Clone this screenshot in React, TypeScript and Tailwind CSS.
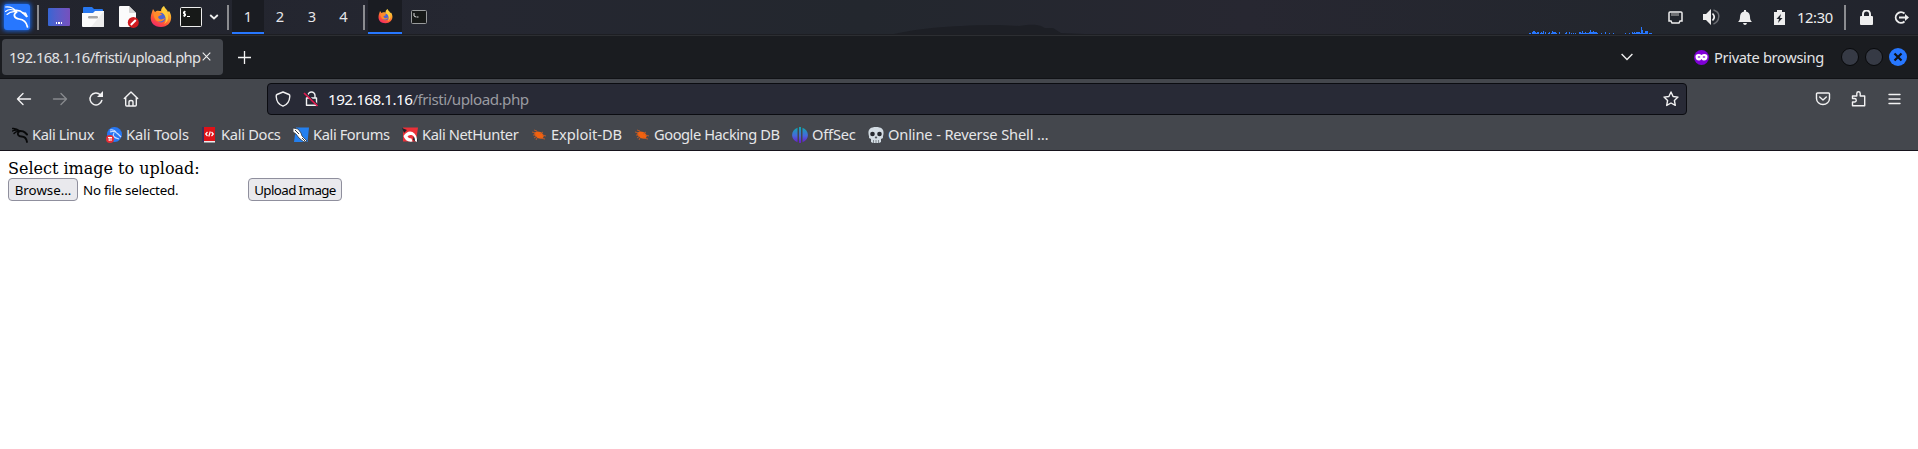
import React from "react";

type Kids = { children?: React.ReactNode };

function Slot({ w, ml, children }: { w: string; ml: string } & Kids) {
  return <div className={`flex h-full shrink-0 items-center ${w} ${ml}`}>{children}</div>;
}

function KaliLogo() {
  return (
    <svg width="26" height="26" viewBox="0 0 26 26" className="rounded-[3px] bg-[#2777ff] shadow-[0_0_4px_1px_#1763df]">
      <g fill="none" stroke="#fff" strokeLinecap="round">
        <path d="M1.500 3Q8 2 12.500 7.500M1.500 7.500Q6 3.500 12.500 7.500M3 10.500Q7 6.500 13 8" strokeWidth="1.100" />
        <path d="M11 6.500q5-.5 8 2.500l3.500 3.500" strokeWidth="1.700" />
        <path d="M18.500 9l3 .3 1.500 3" strokeWidth="1.500" />
        <path d="M12.500 8c-4 3-2 6.500 2.500 7 5 .5 7.500 3 8.500 8" strokeWidth="1.700" />
      </g>
    </svg>
  );
}

function Firefox({ size, id }: { size: number; id: string }) {
  return (
    <svg width={size} height={size} viewBox="0 0 22 22">
      <defs>
        <linearGradient id={id} x1="0.8" y1="0" x2="0.25" y2="1">
          <stop offset="0" stopColor="#fff44f" />
          <stop offset="0.35" stopColor="#ffa42d" />
          <stop offset="0.7" stopColor="#ff5636" />
          <stop offset="1" stopColor="#f0246c" />
        </linearGradient>
      </defs>
      <path d="M2 6l1-3 2 3c2-2 4-1 6-1 0-2 1-4 3-5 1 3 3 3 4 6l1-1c5 7 1 16-8 16C1 21-1 13 2 6z" fill={`url(#${id})`} />
      <circle cx="11" cy="11.8" r="4.7" fill="#4d65d4" />
      <path d="M4 7c3-2 7 0 8 2-2 0-3 1-4 2 1 3 4 3 7 1-1 4-8 5-10 1-1-2-2-4-1-6z" fill="#ff8b2a" />
      <path d="M14 1c0 3 4 5 4 9 1 4-2 7-4 8 4-4 1-9-2-12 0-2 0-4 2-5z" fill="#ffcd3c" />
    </svg>
  );
}

const Sep = () => <div className="h-[25px] w-[2px] bg-[#8b8c90]" />;

const bars: number[][] = [
  [0, 2, 1], [3, 1, 2], [4, 2, 3], [6, 1, 2], [7, 2, 1], [8, 2, 2], [11, 1, 1], [12, 1, 2], [13, 1, 1], [14, 1, 3], [16, 1, 2],
  [19, 2, 1], [20, 1, 2], [22, 1, 1], [23, 1, 3], [24, 4, 1], [24, 3, 2], [30, 1, 2], [36, 2, 1], [37, 1, 2], [40, 1, 2], [42, 1, 1], [44, 1, 1], [46, 1, 1],
  [50, 9, 1], [50, 2, 2], [53, 1, 3], [56, 1, 2], [59, 10, 1], [60, 8, 2], [61, 1, 4], [64, 1, 3], [72, 1, 1], [76, 1, 2], [80, 1, 1], [84, 1, 1],
  [96, 1, 1], [100, 1, 1], [103, 16, 1], [103, 1, 2], [105, 1, 2], [107, 4, 2], [112, 1, 7], [113, 1, 4], [116, 3, 3], [120, 3, 1],
];

function Panel() {
  return (
    <div className="flex h-[36px] w-full flex-col bg-[#23252e]">
      <div className="flex h-[34px] items-center bg-[linear-gradient(90deg,#22242d,#252731_25%,#23272e_45%,#272731_65%,#22262d_88%,#22242d)]">
        <Slot w="w-[26px]" ml="ml-[4px]"><KaliLogo /></Slot>
        <Slot w="w-[2px]" ml="ml-[7px]"><Sep /></Slot>
        <Slot w="w-[22px]" ml="ml-[9px]">
          <div className="flex h-[18px] w-[22px] items-end justify-center gap-[1px] rounded-[1px] bg-linear-to-r from-[#3565d3] to-[#7650bd] pb-[2px]">
            <i className="h-[2px] w-[1.500px] bg-white" /><i className="h-[2px] w-[1.500px] bg-white" /><i className="h-[2px] w-[1.500px] bg-white" />
          </div>
        </Slot>
        <Slot w="w-[22px]" ml="ml-[12px]">
          <svg width="22" height="20" viewBox="0 0 22 20">
            <path d="M1 8V1q0-1 1-1h8l2 2h8q1 0 1 1v5z" fill="#2777ef" />
            <path d="M0 6h11l2-2h9v15q0 1-1 1H1q-1 0-1-1z" fill="#fbfbfb" />
            <path d="M22 4v15q0 1-1 1H9z" fill="#ededed" />
            <rect x="6" y="9" width="10" height="2.4" rx="1.2" fill="#a7a7a7" />
          </svg>
        </Slot>
        <Slot w="w-[21px]" ml="ml-[14px]">
          <svg width="21" height="22" viewBox="0 0 21 22">
            <path d="M1 1q0-1 1-1h9l7 7v13q0 1-1 1H2q-1 0-1-1z" fill="#fbfbfb" />
            <path d="M11 0v6q0 1 1 1h6z" fill="#d5d5d5" />
            <circle cx="15.3" cy="16.4" r="5.5" fill="#d11b20" />
            <path d="M12.8 19l5-5" stroke="#fff" strokeWidth="2" />
          </svg>
        </Slot>
        <Slot w="w-[22px]" ml="ml-[11px]"><Firefox size={22} id="fox" /></Slot>
        <Slot w="w-[22px]" ml="ml-[8px]">
          <svg width="22" height="20" viewBox="0 0 22 20">
            <rect x=".5" y=".5" width="21" height="19" rx="1" fill="#171918" stroke="#eee" />
            <path d="M5.8 4.8H3.5v2h2v2H3M4.5 3.8v6M7 9.5h3" fill="none" stroke="#fff" />
          </svg>
        </Slot>
        <Slot w="w-[10px]" ml="ml-[7px]">
          <svg width="10" height="6"><path d="M1.2 1L5 4.5 8.8 1" fill="none" stroke="#eee" strokeWidth="1.8" /></svg>
        </Slot>
        <Slot w="w-[2px]" ml="ml-[8px]"><Sep /></Slot>
        <div className="ml-[3px] flex h-full text-[14.670px] leading-[32px] text-[#e6e6e8]">
          <div className="w-[32px] border-b-2 border-[#2777ff] bg-[#1a1c22] text-center">1</div>
          <div className="w-[32px] text-center">2</div>
          <div className="w-[32px] text-center">3</div>
          <div className="w-[31px] text-center">4</div>
        </div>
        <Slot w="w-[2px]" ml="ml-[4px]"><Sep /></Slot>
        <div className="ml-[3px] flex h-full w-[34px] items-center justify-center border-b-2 border-[#2777ff] bg-[#1a1c22]">
          <Firefox size={15} id="foxSmall" />
        </div>
        <Slot w="w-[16px]" ml="ml-[9px]">
          <svg width="16" height="14" viewBox="0 0 16 14">
            <rect x=".5" y=".5" width="15" height="13" rx="1" fill="#171918" stroke="#999b9c" />
            <path d="M3 3v3l2 1M5.5 7h2" fill="none" stroke="#ddd" />
          </svg>
        </Slot>
        <div className="flex h-full flex-1 items-end justify-between">
          <svg width="190" height="10" viewBox="0 0 190 10" className="ml-[467px]">
            <path d="M0 10C25 4 65 1 105 1l20 1c18-3 22 0 26 2h8l8 5 23 1z" fill="#1d1f25" />
          </svg>
          <svg width="124" height="8" viewBox="0 0 124 8" shapeRendering="crispEdges">
            {bars.map(([x, w, h], i) => <rect key={i} x={x} y={8 - h} width={w} height={h} fill="#2777ff" />)}
          </svg>
        </div>
        <Slot w="w-[15px]" ml="ml-[15px]">
          <svg width="15" height="13" viewBox="0 0 15 13">
            <path d="M2 1h11q1 0 1 1v8h-2l-1 2H4l-1-2H1V2q0-1 1-1z" fill="none" stroke="#eee" strokeWidth="1.5" />
            <path d="M4 2v3M6 2v3M8 2v3M10 2v3" stroke="#bbb" />
          </svg>
        </Slot>
        <Slot w="w-[18px]" ml="ml-[19px]">
          <svg width="18" height="16" viewBox="0 0 18 16">
            <path d="M1 5h3l5-5v16l-5-5H1z" fill="#eee" />
            <path d="M10.5 4.5q3.5 3.5 0 7" stroke="#eee" strokeWidth="1.7" fill="none" />
            <path d="M11.5 1q6 2 5.2 7-.4 5-5.2 7" stroke="#6c6e73" strokeWidth="1.5" fill="none" />
          </svg>
        </Slot>
        <Slot w="w-[14px]" ml="ml-[18px]">
          <svg width="14" height="15" viewBox="0 0 14 15">
            <path d="M6 0h2v1.5c3 .7 4 3 4 5.5 0 3 1 4 2 5H0c1-1 2-2 2-5 0-2.500 1-4.800 4-5.500zM5 13h4q-.5 2-2 2t-2-2z" fill="#eee" />
          </svg>
        </Slot>
        <Slot w="w-[11px]" ml="ml-[22px]">
          <svg width="11" height="15" viewBox="0 0 11 15">
            <path d="M0 2h3V0h5v2h3v13H0z" fill="#eee" /><path d="M7 4L2.500 9H5l-1 4 4.500-5H6z" fill="#22262d" />
          </svg>
        </Slot>
        <div className="ml-[12px] w-[37px] shrink-0 whitespace-nowrap pb-[1px] text-[14.700px] leading-[20px] tracking-[-0.350px] text-[#eee]">12:30</div>
        <Slot w="w-[2px]" ml="ml-[10px]"><Sep /></Slot>
        <Slot w="w-[13px]" ml="ml-[14px]">
          <svg width="13" height="15" viewBox="0 0 13 15"><rect y="6" width="13" height="9" rx="1" fill="#eee" /><path d="M3 7V4a3.500 3.500 0 017 0v3" stroke="#eee" strokeWidth="2" fill="none" /></svg>
        </Slot>
        <Slot w="w-[15px]" ml="ml-[21px]">
          <svg width="15" height="13" viewBox="0 0 15 13"><path d="M10.500 2.500A5.300 5.300 0 1010.500 10.500M5 6.500h7" stroke="#eee" strokeWidth="1.900" fill="none" /><path d="M11 3l4 3.500-4 3.500z" fill="#eee" /></svg>
        </Slot>
        <div className="w-[9px] shrink-0" />
      </div>
      <div className="h-px bg-[#1d1e23]" />
      <div className="h-px bg-[#2c2e32]" />
    </div>
  );
}

function TabStrip() {
  return (
    <div className="flex h-[43px] items-center border-b border-[#111216] bg-[#1a1c20] text-[#e3e3e5]">
      <div className="ml-[2px] flex h-[36px] w-[221px] items-center rounded-[4px] bg-[#44474d]">
        <span className="ml-[7px] w-[193px] whitespace-nowrap text-[14.670px] tracking-[-0.550px]">192.168.1.16/fristi/upload.php</span>
        <svg width="9" height="9" viewBox="0 0 9 9" className="mb-[1px]"><path d="M.7.700l7.600 7.600M8.300.700L.7 8.300" stroke="#eee" strokeWidth="1.100" /></svg>
      </div>
      <svg width="13" height="13" className="ml-[15px]"><path d="M6.500 0v13M0 6.500h13" stroke="#f4f4f4" strokeWidth="1.300" /></svg>
      <div className="flex-1" />
      <svg width="12" height="8" className="mr-[61px]"><path d="M.6 1L6 6.500 11.400 1" stroke="#eee" strokeWidth="1.400" fill="none" /></svg>
      <svg width="15" height="15" viewBox="0 0 15 15">
        <circle cx="7.500" cy="7.500" r="7.500" fill="#8000d7" />
        <path d="M1.500 6.500q0-2.500 3-2.500 2 0 3 .9 1-.9 3-.9 3 0 3 2.500 0 4-3.500 4-1.600 0-2.500-1.500-1 1.500-2.500 1.500-3.500 0-3.500-4z" fill="#fff" />
        <path d="M3.500 7q1.500-1.500 3 0-1.500 1.500-3 0zM8.500 7q1.500-1.500 3 0-1.500 1.500-3 0z" fill="#8000d7" />
      </svg>
      <span className="ml-[5px] w-[127px] whitespace-nowrap text-[14.670px] tracking-[-0.350px]">Private browsing</span>
      <div className="mr-[11px] flex gap-[6px]">
        <i className="h-[18px] w-[18px] rounded-full border border-[#08090b] bg-[#363a45]" />
        <i className="h-[18px] w-[18px] rounded-full border border-[#08090b] bg-[#363a45]" />
        <svg width="18" height="18"><circle cx="9" cy="9" r="9" fill="#2777ff" /><path d="M5.500 5.500l7 7M12.500 5.500l-7 7" stroke="#101116" strokeWidth="2.200" /></svg>
      </div>
    </div>
  );
}

function Line({ w = 16, h = 16, d, color = "#f2f2f3" }: { w?: number; h?: number; d: string; color?: string }) {
  return <svg width={w} height={h} viewBox={`0 0 ${w} ${h}`} className="shrink-0"><path d={d} fill="none" stroke={color} strokeWidth="1.400" strokeLinecap="round" strokeLinejoin="round" /></svg>;
}

function Toolbar() {
  return (
    <div className="flex h-[40px] items-center">
      <Slot w="w-[16px]" ml="ml-[16px]"><Line d="M14.500 8H1.500M7 2.500L1.500 8 7 13.500" /></Slot>
      <Slot w="w-[16px]" ml="ml-[20px]"><Line d="M1.500 8h13M9 2.500L14.500 8 9 13.500" color="#87898d" /></Slot>
      <Slot w="w-[16px]" ml="ml-[20px]">
        <svg width="16" height="16"><path d="M13.800 9.500a6 6 0 11-1.500-5.800" fill="none" stroke="#f2f2f3" strokeWidth="1.500" strokeLinecap="round" /><path d="M9 6h6V0z" fill="#f2f2f3" /></svg>
      </Slot>
      <Slot w="w-[16px]" ml="ml-[19px]"><Line d="M1.300 7.500L8 1l6.700 6.500M2.700 6.500V14q0 1 1 1h8.600q1 0 1-1V6.500M6 15v-4q0-1.500 2-1.500T10 11v4" /></Slot>
      <div className="ml-[128px] flex h-[32px] w-[1420px] items-center rounded-[4px] border border-[#0b0c11] bg-[#282a36]">
        <Slot w="w-[16px]" ml="ml-[7px]"><Line d="M8 1l6 2.500q1 .5.800 2C14.500 10 12 14 8 15.200 4 14 1.500 10 1.200 5.500q-.2-1.500.8-2z" /></Slot>
        <Slot w="w-[16px]" ml="ml-[12px]">
          <svg width="16" height="16"><path d="M5 7V4.500a3.500 3.500 0 017 0V7M3.500 7h10v7.300h-10z" stroke="#f2f2f3" strokeWidth="1.400" fill="none" strokeLinejoin="round" /><path d="M2 1.500l13.500 13" stroke="#282a36" strokeWidth="1.500" /><path d="M1 2l13.500 13" stroke="#e3194f" strokeWidth="1.700" /></svg>
        </Slot>
        <span className="ml-[9px] flex-1 whitespace-nowrap text-[15.200px] tracking-[-0.500px] text-[#9a9ba1]"><span className="text-[#fbfbfe]">192.168.1.16</span>/fristi/upload.php</span>
        <div className="mr-[7px]"><Line d="M8 1l2.100 4.500 4.900.6-3.600 3.400.9 4.900L8 12l-4.300 2.400.9-4.900L1 6.100l4.900-.6z" /></div>
      </div>
      <div className="flex-1" />
      <Slot w="w-[16px]" ml="ml-0"><Line d="M2.500 2h11q1 0 1 1v4.500a6.500 6 0 01-13 0V3q0-1 1-1zM4.700 6L8 9l3.300-3" /></Slot>
      <Slot w="w-[16px]" ml="ml-[20px]"><Line d="M1.500 14.700V11h2a1.500 1.500 0 000-3.500h-2V5h4.300V2.500a1.700 1.700 0 013.400 0V5h4.500v9.700z" /></Slot>
      <Slot w="w-[13px]" ml="ml-[21px]"><Line w={13} h={12} d="M1 1.500h11M1 6h11M1 10.500h11" /></Slot>
      <div className="w-[17px]" />
    </div>
  );
}

function BookmarkIcon({ name }: { name: string }) {
  return (
    <svg width="16" height="16" viewBox="0 0 16 16" className="block">
      {name === "linux" && <g fill="none" stroke="#08090a" strokeLinecap="round"><path d="M.5 1.500Q4 1 8 4M.5 4Q4 2 8 4M2 6.500Q4 4 8 4.500" strokeWidth="1.400" /><path d="M7 4q4-.500 6 1.500l2 2" strokeWidth="2" /><path d="M7 4.500c-2.500 2.500-.5 5 2.500 5 3.500 0 5 2 5.500 5.500" strokeWidth="1.800" /></g>}
      {name === "tools" && <g><circle cx="8.500" cy="7.500" r="7.500" fill="#2777f3" /><path d="M4 5q4-2 8 2l3 3M8 6q-3 4 5 6M4 3q4-1 6 2" stroke="#c8dcff" strokeWidth="1.200" fill="none" /><circle cx="4" cy="12" r="4" fill="#e52d34" /><path d="M2 10.500h4M3.200 10.500V14M5 10.500V14" stroke="#fff" /></g>}
      {name === "docs" && <g><path d="M1 0h13v15H1z" fill="#df1218" /><path d="M1 0h2v15H1z" fill="#39315a" /><path d="M3 14h11v1.500H3z" fill="#eee" /><path d="M6.500 5L4.700 7l1.800 2M10.500 5l1.800 2-1.800 2M9.300 4.500l-1.500 5" stroke="#fff" strokeWidth="1.200" fill="none" /></g>}
      {name === "forums" && <g><path d="M3 .5h13l-1.500 14.500H1z" fill="#2480ef" /><path d="M0 1l5 1 3 4 1 3 5 5-3 1-5-4-3-4-3-2z" fill="#fff" stroke="#22272d" strokeWidth=".7" /><path d="M2 3l4 4M9 11l3 3" stroke="#222" strokeWidth=".9" /></g>}
      {name === "hunter" && <g><path d="M1 .5h15l-2 14H1z" fill="#ea3038" /><path d="M0 1l5 2-3 3zM12 8l4 5-1 2-4-2z" fill="#1d2229" /><path d="M1.500 9q4-6 9-4 5 3 4.500 10l-2-1q0-5-3.500-6-3-.5-4 1.500 1 2 4 2l1 3q-7 1-9-5.500z" fill="#fff" /></g>}
      {name === "exploit" && <g><ellipse cx="8" cy="8" rx="5" ry="3.200" transform="rotate(25 8 8)" fill="#f2620f" /><path d="M1 5l4 1M3 11l3-2M12 5l-3 2M11 8l4 1M6 4l-3-1M9 11l5 1M2 8h3M6 11l-1 2" stroke="#c65a25" strokeWidth=".9" /></g>}
      {name === "offsec" && <g><defs><linearGradient id="off" x2="0" y2="16" gradientUnits="userSpaceOnUse"><stop stopColor="#0eabae" /><stop offset=".55" stopColor="#4767dc" /><stop offset="1" stopColor="#6b18c7" /></linearGradient></defs><path d="M5.500.7v14.500C-1.700 13-1.700 3 5.500.700zM10.500.7v14.500C17.700 13 17.700 3 10.500.700zM7 0h2v16H7z" fill="url(#off)" /></g>}
      {name === "skull" && <g><path d="M8 0c5 0 8 2 7.500 6.500 0 2-1 3-.5 4.500l-2 1v3l-2 1H5l-2-1v-3l-2-1c.5-1.500-.500-2.500-.500-4.500C0 2 3 0 8 0z" fill="#d3dce3" /><circle cx="4.500" cy="7" r="2.300" fill="#26292f" /><circle cx="11.500" cy="7" r="2.300" fill="#26292f" /><path d="M7 11l1-1.500L9 11zM5.500 13v3M8 13v3M10.500 13v3" stroke="#5b6269" strokeWidth=".7" /></g>}
    </svg>
  );
}

const bookmarks = [
  { icon: "linux", label: "Kali Linux", w: "w-[94px]", t: "tracking-[-0.400px]" },
  { icon: "tools", label: "Kali Tools", w: "w-[95px]", t: "tracking-[-0.150px]" },
  { icon: "docs", label: "Kali Docs", w: "w-[92px]", t: "tracking-[-0.300px]" },
  { icon: "forums", label: "Kali Forums", w: "w-[109px]", t: "tracking-[-0.400px]" },
  { icon: "hunter", label: "Kali NetHunter", w: "w-[129px]", t: "tracking-[-0.400px]" },
  { icon: "exploit", label: "Exploit-DB", w: "w-[103px]", t: "tracking-[-0.050px]" },
  { icon: "exploit", label: "Google Hacking DB", w: "w-[158px]", t: "tracking-[-0.450px]" },
  { icon: "offsec", label: "OffSec", w: "w-[76px]", t: "tracking-[-0.200px]" },
  { icon: "skull", label: "Online - Reverse Shell …", w: "w-[190px]", t: "tracking-[-0.150px]" },
];

export default function App() {
  return (
    <div className="flex h-[449px] w-full flex-col overflow-hidden bg-white font-['Noto_Sans',sans-serif]">
      <Panel />
      <TabStrip />
      <div className="h-[72px] border-b border-[#16131c] bg-[#44474d]">
        <Toolbar />
        <div className="flex h-[31px] items-center pl-[12px] text-[14.670px] text-[#e6e6e8]">
          {bookmarks.map((b) => (
            <div key={b.label} className={`flex shrink-0 items-center gap-[4px] whitespace-nowrap ${b.w}`}>
              <BookmarkIcon name={b.icon} /><span className={`pb-px ${b.t}`}>{b.label}</span>
            </div>
          ))}
        </div>
      </div>
      <main className="pl-[8px] pt-[8px] text-black">
        <div className="h-[19px] font-['DejaVu_Serif',serif] text-[16px] leading-[19px]">Select image to upload:</div>
        <div className="flex items-center text-[13.330px] leading-[20px]">
          <button className="h-[23px] w-[70px] whitespace-nowrap rounded-[4px] border border-[#8f8f9d] bg-[#e9e9ed] leading-[20px]">Browse…</button>
          <span className="ml-[5px] w-[165px] tracking-[-0.250px]">No file selected.</span>
          <button className="h-[23px] w-[94px] whitespace-nowrap rounded-[4px] border border-[#8f8f9d] bg-[#e9e9ed] leading-[20px] tracking-[-0.600px]">Upload Image</button>
        </div>
      </main>
    </div>
  );
}
